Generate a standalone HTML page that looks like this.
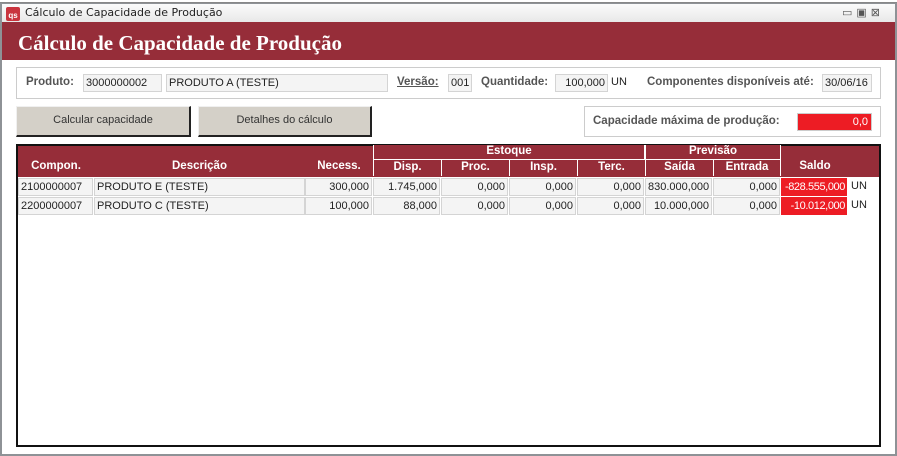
<!DOCTYPE html>
<html><head><meta charset="utf-8"><style>
*{margin:0;padding:0;box-sizing:border-box}
body{width:897px;height:456px;position:relative;background:#fff;font-family:"Liberation Sans",sans-serif;font-size:11px;color:#222;overflow:hidden}
.a{position:absolute}
.f{position:absolute;border:1px solid #d4d4d4;background:#f4f4f4;height:18px;line-height:16px;padding:0 2px;white-space:nowrap;font-size:11px;overflow:hidden}
.r{text-align:right}
.lb{position:absolute;font-weight:bold;color:#555;font-size:11.5px}
.h{position:absolute;background:#962d39;color:#fff;font-weight:bold;font-size:11.5px;text-align:center;border-left:1px solid #fff;height:16px;line-height:15px}
.btn{position:absolute;background:#d4d0c8;border-right:2px solid #222;border-bottom:2px solid #222;border-top:1px solid #f0f0f0;border-left:1px solid #f0f0f0;text-align:center;line-height:27px;color:#333;font-size:11px}
</style></head><body>
<div class="a" style="left:0;top:0;width:897px;height:3px;background:#fff;border-bottom:1px solid #888"></div>
<div class="a" style="left:0;top:3px;width:897px;height:453px;border:2px solid #8e9296;border-top:1px solid #8e9296"></div>
<div class="a" style="left:2px;top:4px;width:893px;height:18px;background:linear-gradient(#fbfbfb,#e8e8e8)"></div>
<div class="a" style="left:6px;top:7px;width:14px;height:14px;background:#c9343e;border-radius:2px;color:#fff;font-size:8px;font-weight:bold;line-height:18px;text-align:center">qs</div>
<div class="a" style="left:25px;top:6px;color:#222;font-family:'DejaVu Sans',sans-serif;font-size:11px">Cálculo de Capacidade de Produção</div>
<div class="a" style="left:842px;top:6px;color:#555;font-size:11px;letter-spacing:4px">▭▣⊠</div>
<div class="a" style="left:2px;top:22px;width:893px;height:38px;background:#962d39"></div>
<div class="a" style="left:18px;top:31px;font-family:'Liberation Serif',serif;font-weight:bold;font-size:21px;color:#fff">Cálculo de Capacidade de Produção</div>

<div class="a" style="left:16px;top:67px;width:865px;height:32px;border:1px solid #ccc"></div>
<div class="lb" style="left:26px;top:76px">Produto:</div>
<div class="f" style="left:83px;top:74px;width:79px">3000000002</div>
<div class="f" style="left:166px;top:74px;width:222px">PRODUTO A (TESTE)</div>
<div class="lb" style="left:397px;top:76px;text-decoration:underline">Versão:</div>
<div class="f" style="left:448px;top:74px;width:24px">001</div>
<div class="lb" style="left:481px;top:76px">Quantidade:</div>
<div class="f r" style="left:555px;top:74px;width:53px">100,000</div>
<div class="a" style="left:611px;top:76px">UN</div>
<div class="lb" style="left:647px;top:76px">Componentes disponíveis até:</div>
<div class="f" style="left:822px;top:74px;width:50px">30/06/16</div>

<div class="btn" style="left:16px;top:106px;width:175px;height:31px">Calcular capacidade</div>
<div class="btn" style="left:198px;top:106px;width:174px;height:31px">Detalhes do cálculo</div>
<div class="a" style="left:584px;top:106px;width:297px;height:31px;border:1px solid #ccc"></div>
<div class="lb" style="left:593px;top:115px">Capacidade máxima de produção:</div>
<div class="a r" style="left:797px;top:113px;width:75px;height:18px;background:#ed1c24;color:#fff;line-height:17px;padding-right:3px;border:1px solid #ccc">0,0</div>

<div class="a" style="left:16px;top:144px;width:865px;height:303px;border:2px solid #111"></div>
<div class="a" style="left:18px;top:146px;width:861px;height:31px;background:#962d39"></div>
<div class="h" style="left:18px;top:159px;width:76px;border:0">Compon.</div>
<div class="h" style="left:94px;top:159px;width:211px;border:0">Descrição</div>
<div class="h" style="left:305px;top:159px;width:68px;border:0">Necess.</div>
<div class="h" style="left:373px;top:145px;width:272px;height:15px;line-height:13px;border-bottom:1px solid #fff;border-right:1px solid #fff">Estoque</div>
<div class="h" style="left:373px;top:160px;width:68px">Disp.</div>
<div class="h" style="left:441px;top:160px;width:68px">Proc.</div>
<div class="h" style="left:509px;top:160px;width:68px">Insp.</div>
<div class="h" style="left:577px;top:160px;width:68px">Terc.</div>
<div class="h" style="left:645px;top:145px;width:136px;height:15px;line-height:13px;border-bottom:1px solid #fff;border-right:1px solid #fff">Previsão</div>
<div class="h" style="left:645px;top:160px;width:68px">Saída</div>
<div class="h" style="left:713px;top:160px;width:68px;border-right:1px solid #fff">Entrada</div>
<div class="h" style="left:782px;top:159px;width:66px;border:0">Saldo</div>

<div class="f" style="left:18px;top:178px;width:75px">2100000007</div>
<div class="f" style="left:94px;top:178px;width:211px">PRODUTO E (TESTE)</div>
<div class="f r" style="left:305px;top:178px;width:67px">300,000</div>
<div class="f r" style="left:373px;top:178px;width:67px">1.745,000</div>
<div class="f r" style="left:441px;top:178px;width:67px">0,000</div>
<div class="f r" style="left:509px;top:178px;width:67px">0,000</div>
<div class="f r" style="left:577px;top:178px;width:67px">0,000</div>
<div class="f r" style="left:645px;top:178px;width:67px">830.000,000</div>
<div class="f r" style="left:713px;top:178px;width:67px">0,000</div>
<div class="f r" style="left:781px;top:178px;width:66px;background:#ed1c24;color:#fff;border-color:#ed1c24;letter-spacing:-0.4px;padding:0 1px">-828.555,000</div>
<div class="a" style="left:851px;top:180px">UN</div>

<div class="f" style="left:18px;top:197px;width:75px">2200000007</div>
<div class="f" style="left:94px;top:197px;width:211px">PRODUTO C (TESTE)</div>
<div class="f r" style="left:305px;top:197px;width:67px">100,000</div>
<div class="f r" style="left:373px;top:197px;width:67px">88,000</div>
<div class="f r" style="left:441px;top:197px;width:67px">0,000</div>
<div class="f r" style="left:509px;top:197px;width:67px">0,000</div>
<div class="f r" style="left:577px;top:197px;width:67px">0,000</div>
<div class="f r" style="left:645px;top:197px;width:67px">10.000,000</div>
<div class="f r" style="left:713px;top:197px;width:67px">0,000</div>
<div class="f r" style="left:781px;top:197px;width:66px;background:#ed1c24;color:#fff;border-color:#ed1c24;letter-spacing:-0.4px;padding:0 1px">-10.012,000</div>
<div class="a" style="left:851px;top:199px">UN</div>
</body></html>
